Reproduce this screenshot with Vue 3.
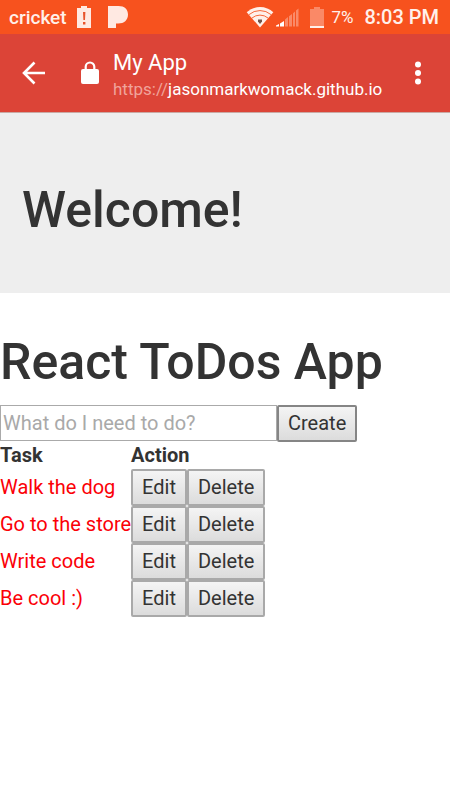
<script setup>
import { ref } from 'vue'

const draft = ref('')
const tasks = ref(['Walk the dog', 'Go to the store', 'Write code', 'Be cool :)'])

function create() {
  const text = draft.value.trim()
  if (text) tasks.value.push(text)
  draft.value = ''
}

function edit(index) {
  draft.value = tasks.value[index]
  tasks.value.splice(index, 1)
}

function remove(index) {
  tasks.value.splice(index, 1)
}
</script>

<template>
  <div class="screen">
    <div class="status">
      <span class="carrier">cricket</span>
      <svg class="low" width="16" height="24" viewBox="0 0 16 24" aria-hidden="true">
        <path fill="#ffe9e2" d="M5 1h6v2h4v20H1V3h4z" />
        <path fill="#e8532c" d="M7 7h2.400l-.4 8H7.400zM7 17h2.400v2.400H7z" />
      </svg>
      <svg class="pandora" width="22" height="24" viewBox="0 0 22 24" aria-hidden="true">
        <path fill="#ffe9e2" d="M1 1h10.500C17.500 1 21 4.400 21 9.500c0 5.700-4 9-9.800 9H9V23H1z" />
      </svg>
      <svg class="wifi" width="28" height="22" viewBox="0 0 28 22" aria-hidden="true">
        <path fill="#fff0ea" d="M14 1C8.800 1 4.200 3 .7 6.200L14 21.500 27.300 6.200C23.800 3 19.200 1 14 1z" />
        <g fill="none" stroke="#f6693c" stroke-width="1">
          <path d="M3 8.600a17 17 0 0 1 22 0" />
          <path d="M6 12a12.500 12.500 0 0 1 16 0" />
        </g>
        <path fill="#73554b" d="M12 13.500h4v2L14 18l-2-2.500z" />
      </svg>
      <svg class="signal" width="23" height="19" viewBox="0 0 23 19" aria-hidden="true">
        <path fill="#fff" d="M0 18.500v-1L3 16v2.500zM4 18.500v-3l4-2.500v5.500z" />
        <path fill="#fa8a68" d="M9 18.500v-7L12 9v9.500zM13 18.500V8.300L16 6v12.500zM17 18.500V5.300L19 3.600v14.900zM20 18.500V2.600L22.500.5v18z" />
      </svg>
      <svg class="battery" width="14" height="21" viewBox="0 0 14 21" aria-hidden="true">
        <path fill="#fa8967" d="M4 0h6v2h4v19H0V2h4z" />
        <path fill="#fff0ea" d="M0 19h14v2H0z" />
      </svg>
      <span class="percent">7%</span>
      <span class="clock">8:03 PM</span>
    </div>

    <header class="toolbar">
      <button class="icon back" type="button" aria-label="Back">
        <svg width="24" height="24" viewBox="0 0 24 24" aria-hidden="true">
          <path fill="none" stroke="#fff" stroke-width="2.600" d="M23 12H3M12.500 1.500L2 12l10.500 10.500" />
        </svg>
      </button>
      <svg class="lock" width="18" height="24" viewBox="0 0 18 24" aria-hidden="true">
        <path fill="none" stroke="#fff" stroke-width="2.200" d="M4.700 9V5.800a4.300 4.300 0 0 1 8.600 0V9" />
        <rect y="8" width="18" height="15" rx="2" fill="#fff" />
      </svg>
      <div class="site">
        <span class="name">My App</span>
        <span class="url"><span class="scheme">https://</span>jasonmarkwomack.github.io</span>
      </div>
      <button class="icon more" type="button" aria-label="More options">
        <svg width="6" height="24" viewBox="0 0 6 24" aria-hidden="true">
          <g fill="#fff">
            <circle cx="3" cy="3.500" r="3" />
            <circle cx="3" cy="12" r="3" />
            <circle cx="3" cy="20.500" r="3" />
          </g>
        </svg>
      </button>
    </header>

    <section class="jumbotron">
      <h1>Welcome!</h1>
    </section>

    <main>
      <h1>React ToDos App</h1>
      <form class="create" @submit.prevent="create">
        <input v-model="draft" type="text" placeholder="What do I need to do?" aria-label="What do I need to do?" />
        <button class="btn dark" type="submit">Create</button>
      </form>
      <table>
        <thead>
          <tr>
            <th>Task</th>
            <th>Action</th>
          </tr>
        </thead>
        <tbody>
          <tr v-for="(task, index) in tasks" :key="task">
            <td class="task">{{ task }}</td>
            <td>
              <div class="actions">
                <button class="btn" type="button" @click="edit(index)">Edit</button>
                <button class="btn" type="button" @click="remove(index)">Delete</button>
              </div>
            </td>
          </tr>
        </tbody>
      </table>
    </main>
  </div>
</template>

<style>
body {
  margin: 0;
  background: #fff;
}
</style>

<style scoped>
.screen {
  font-family: Roboto, "Liberation Sans", sans-serif;
  font-size: 20px;
  line-height: 27px;
  color: #333;
}

.status {
  display: flex;
  align-items: center;
  height: 34px;
  padding: 0 11px 0 9px;
  background: #f7521e;
  color: #fff0ea;
  white-space: nowrap;
}

.status svg {
  flex: none;
}

.carrier {
  font-size: 19px;
  font-weight: 500;
}

.low {
  margin-left: 9px;
}

.pandora {
  margin-left: 15px;
}

.wifi {
  margin-left: auto;
}

.signal {
  margin-left: 2px;
}

.battery {
  margin-left: 11px;
}

.percent {
  margin-left: 7px;
  font-size: 17px;
}

.clock {
  margin-left: 11px;
  font-size: 20px;
  font-weight: 500;
}

.toolbar {
  display: flex;
  align-items: center;
  box-sizing: border-box;
  height: 79px;
  padding: 0 29px 0 22px;
  background: #dc4437;
  border-bottom: 1px solid #c9a9a4;
  color: #fff;
}

.icon {
  display: flex;
  flex: none;
  padding: 0;
  border: 0;
  background: none;
}

.lock {
  flex: none;
  margin: 0 14px 0 35px;
}

.site {
  display: flex;
  flex: 1;
  flex-direction: column;
  min-width: 0;
  padding-top: 4px;
}

.name {
  font-size: 22px;
}

.url {
  font-size: 17px;
  line-height: 26px;
}

.scheme {
  color: #f0a39b;
}

h1 {
  margin: 0;
  font-size: 50px;
  font-weight: 500;
  line-height: 56px;
}

.jumbotron {
  padding: 69px 22px 55px;
  background: #eee;
}

main {
  padding-top: 41px;
}

.create {
  display: flex;
  margin-top: 15px;
}

input {
  box-sizing: border-box;
  width: 277px;
  height: 36px;
  padding: 2px;
  border: 1px solid #aaa;
  border-radius: 0;
  background: #fff;
  color: #333;
  font: inherit;
}

input::placeholder {
  color: #a9a9a9;
  opacity: 1;
}

.btn {
  box-sizing: border-box;
  height: 37px;
  padding: 0 9px;
  border: 2px solid #a9a9a9;
  border-radius: 2px;
  background: linear-gradient(#f4f4f4, #dcdcdc);
  color: #333;
  font: inherit;
}

.btn.dark {
  border-color: #858585;
}

table {
  border-collapse: collapse;
}

th,
td {
  padding: 0;
  text-align: left;
}

th {
  font-weight: 700;
}

.task {
  color: #fb0007;
}

.actions {
  display: flex;
}
</style>
